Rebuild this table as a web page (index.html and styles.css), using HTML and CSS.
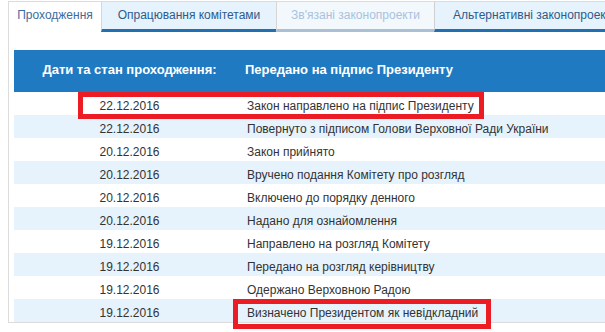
FILE: index.html
```html
<!DOCTYPE html>
<html lang="uk">
<head>
<meta charset="utf-8">
<link rel="stylesheet" href="styles.css">
</head>
<body>
<div class="panel">
  <div class="tabs">
    <div class="tab tab-active">Проходження</div>
    <div class="tab tab-committee">Опрацювання комітетами</div>
    <div class="tab tab-disabled">Зв'язані законопроекти</div>
    <div class="tab tab-alt">Альтернативні законопроекти</div>
  </div>
  <div class="content">
    <div class="table-wrap">
      <table class="history">
        <thead>
          <tr>
            <th class="col-date">Дати та стан проходження:</th>
            <th class="col-state">Передано на підпис Президенту</th>
          </tr>
        </thead>
        <tbody>
          <tr><td class="col-date">22.12.2016</td><td class="col-state">Закон направлено на підпис Президенту</td></tr>
          <tr><td class="col-date">22.12.2016</td><td class="col-state">Повернуто з підписом Голови Верховної Ради України</td></tr>
          <tr><td class="col-date">20.12.2016</td><td class="col-state">Закон прийнято</td></tr>
          <tr><td class="col-date">20.12.2016</td><td class="col-state">Вручено подання Комітету про розгляд</td></tr>
          <tr><td class="col-date">20.12.2016</td><td class="col-state">Включено до порядку денного</td></tr>
          <tr><td class="col-date">20.12.2016</td><td class="col-state">Надано для ознайомлення</td></tr>
          <tr><td class="col-date">19.12.2016</td><td class="col-state">Направлено на розгляд Комітету</td></tr>
          <tr><td class="col-date">19.12.2016</td><td class="col-state">Передано на розгляд керівництву</td></tr>
          <tr><td class="col-date">19.12.2016</td><td class="col-state">Одержано Верховною Радою</td></tr>
          <tr><td class="col-date">19.12.2016</td><td class="col-state">Визначено Президентом як невідкладний</td></tr>
        </tbody>
      </table>
      <div class="mark mark-first"></div>
      <div class="mark mark-last"></div>
    </div>
  </div>
</div>
</body>
</html>
```

FILE: styles.css
```css
html, body {
  margin: 0;
  padding: 0;
  background: #ffffff;
  overflow: hidden;
}

body {
  font-family: "Liberation Sans", Arial, sans-serif;
  width: 605px;
  height: 332px;
}

.panel {
  margin: 1px 0 0 8px;
  width: 660px;
  border-left: 1px solid #dcdcdc;
  border-bottom: 1px solid #dcdcdc;
}

.tabs {
  display: flex;
  height: 31px;
}

.tab {
  box-sizing: border-box;
  height: 31px;
  border-top: 1px solid #dcdcdc;
  font-size: 12px;
  line-height: 27px;
  text-align: center;
  white-space: nowrap;
}

.tab-active {
  width: 92px;
  background: #ffffff;
  color: #3d6b9e;
}

.tab-committee {
  width: 175px;
  border-left: 1px solid #d6d6d6;
  border-bottom: 3px solid #2170b2;
  background: #e6f2fc;
  color: #2d5b8d;
}

.tab-disabled {
  width: 158px;
  border-left: 1px solid #d6d6d6;
  border-bottom: 3px solid #a9c0d6;
  background: #f3f8fd;
  color: #a8c2de;
}

.tab-alt {
  width: 230px;
  border-left: 1px solid #d0d0d0;
  border-bottom: 3px solid #2170b2;
  background: #e6f2fc;
  color: #2d5b8d;
  text-align: left;
  padding-left: 18px;
}

.content {
  padding: 18px 0 0 5px;
}

.table-wrap {
  position: relative;
}

.history {
  border-collapse: collapse;
  width: 100%;
}

.history th {
  height: 42px;
  box-sizing: border-box;
  padding: 0 0 3px 0;
  line-height: 39px;
  background: #1f7ac2;
  color: #ffffff;
  font-size: 13px;
  font-weight: bold;
  text-align: left;
  white-space: nowrap;
}

.history th.col-date {
  text-align: center;
}

.history td {
  height: 23px;
  box-sizing: border-box;
  padding: 5px 0 0 0;
  line-height: 18px;
  font-size: 12px;
  color: #333333;
  white-space: nowrap;
  vertical-align: top;
}

.history tbody tr:nth-child(even) td {
  background: #e6f2fc;
}

.col-date {
  width: 231px;
  text-align: center;
}

.history td.col-state {
  padding-left: 2px;
}

.mark {
  position: absolute;
  box-sizing: border-box;
  border: 5px solid #ec1c24;
}

.mark-first {
  left: 64px;
  top: 42px;
  width: 406px;
  height: 27px;
}

.mark-last {
  left: 219px;
  top: 249px;
  width: 258px;
  height: 30px;
}
```
